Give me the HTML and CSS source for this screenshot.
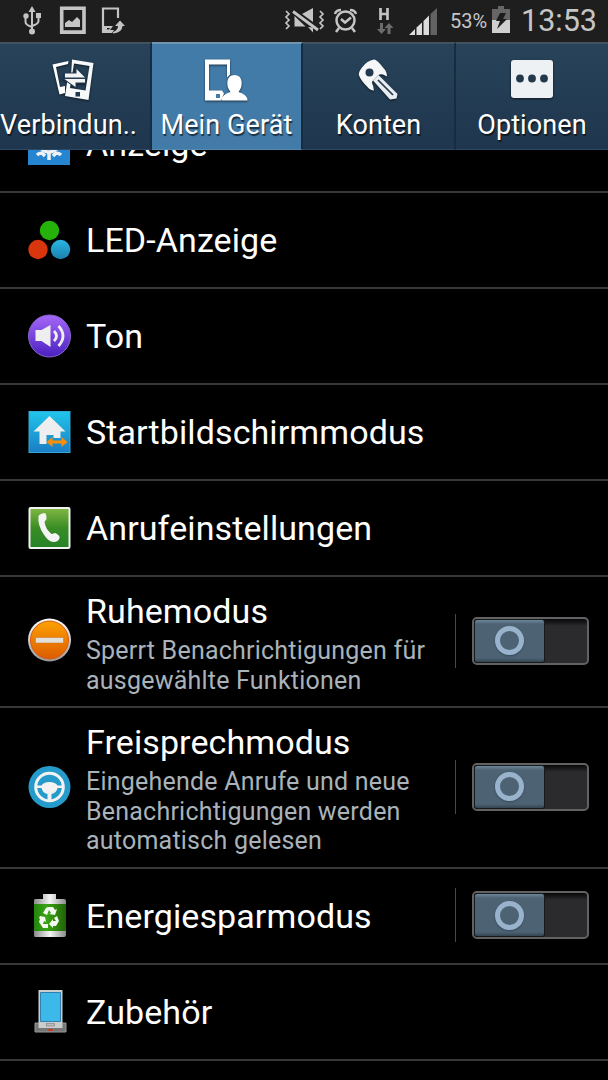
FILE: index.html
```html
<!DOCTYPE html>
<html lang="de">
<head>
  <meta charset="UTF-8" />
  <meta name="viewport" content="width=device-width, initial-scale=1.0"/>
  <title>Einstellungen</title>
  <link rel="stylesheet" href="styles.css">
</head>
<body>

<div class="statusbar">
  <svg class="status-icons" width="130" height="42" viewBox="0 0 130 42">
    <!-- USB -->
    <g fill="none" stroke="#c4c4c4" stroke-width="2">
      <path d="M32 10v20M25.500 18v4q0 3 6.500 5M38.500 17v4q0 3-6.500 5"/>
    </g>
    <g fill="#c4c4c4">
      <path d="M32 6l3.500 6h-7z"/><circle cx="32" cy="31.500" r="3"/>
      <circle cx="26" cy="16" r="2.700"/><path d="M36 13h5v5h-5z"/>
    </g>
    <!-- Bild -->
    <path d="M61.700 8.200h22.300v23.900h-22.300z" fill="none" stroke="#c4c4c4" stroke-width="3.600"/>
    <path d="M65 27v-4l4-3 3 2 5-5 3 3v7z" fill="#c4c4c4"/>
    <!-- Handy mit Pfeil -->
    <path d="M118 18V8.500H103V32h8" fill="none" stroke="#c4c4c4" stroke-width="2.200"/>
    <path d="M103 26h10l-3 4h4l-2 3h-9z" fill="#c4c4c4"/>
    <path d="M107 28h3l-1 1.500h-2z" fill="#1e1e1e"/>
    <path d="M113 32q5-2 5-6h-3l5-5.500 5 5.500h-2.500q-.500 7-9.500 7.500z" fill="#c4c4c4"/>
  </svg>
  <div class="status-right">
    <svg width="164" height="42" viewBox="284 0 164 42">
      <!-- Vibration, stumm -->
      <g fill="none" stroke="#c4c4c4" stroke-width="1.700">
        <path d="M286 11l3 3-3 3 3 3-3 3 3 3-3 3M320 11l3 3-3 3 3 3-3 3 3 3-3 3"/>
      </g>
      <path d="M294.500 16l11 10.500h-11zM302 14l11-6v14zM308 27l5 .5v5z" fill="#c4c4c4"/>
      <path d="M293 11.500l25 18.500" stroke="#c4c4c4" stroke-width="2.800"/>
      <!-- Wecker -->
      <g fill="none" stroke="#c4c4c4" stroke-width="2.500">
        <circle cx="345.500" cy="20.500" r="9"/>
        <path d="M341 19l4 3.500 6-5M339 28l-3 4M352 28l3 4M335 14q1-4 6-4M350 10q5 0 6 4"/>
      </g>
      <!-- Datenverbindung -->
      <path d="M380.500 8v12M387.500 8v12M381 14h6" stroke="#c4c4c4" stroke-width="2.700"/>
      <g fill="#6c6c6c">
        <path d="M380 23h3v6h3l-4.500 5-4.500-5h3zM387.500 34h3v-6h3l-4.500-5-4.500 5h3z"/>
      </g>
      <path d="M430.500 14l6.500-6v27h-6.500z" fill="#626262"/>
      <path d="M409 35l6-6v6zM416.500 27.500l5.500-5V35h-5.500zM423.500 21l5.500-5.500V35h-5.500z" fill="#dcdcdc"/>
    </svg>
    <span class="percent">53%</span>
    <svg class="battery" width="20" height="28" viewBox="0 0 20 28">
      <path d="M7 0h6v3h6v12H1V3h6z" fill="#666"/>
      <path d="M1 14h18v13H1z" fill="#cfcfcf"/>
      <path d="M9 7h6l-3 6h4L6 23l3-8H5z" fill="#1d1d1d"/>
    </svg>
    <span class="time">13:53</span>
  </div>
</div>

<div class="tabs">
  <div class="tab verbindungen">
    <svg width="46" height="46" viewBox="0 0 46 46">
      <path d="M2.500 6.500L18.500 3l-.5 3L6 9l4 20 5-1v7l-5.500 1.500z" fill="#fff"/>
      <path d="M22 1.500l21.500 3.500-5 37L15 38l3-20h3zM24 5.500L20 30l15.500 2.500L39.500 8z" fill="#f6f8f9" fill-rule="evenodd"/>
      <path d="M25.500 34h4.500v4.500h-4.500z" fill="#20384e"/>
      <path d="M15 15.500h11.500V11l8.500 8.500H15zM35 21v3.500h-9.500V29L14.500 21z" fill="#f2f4f6" stroke="#243c52" stroke-width="2" paint-order="stroke"/>
    </svg>
    <span>Verbindun..</span>
  </div>
  <div class="tab active">
    <svg width="46" height="46" viewBox="0 0 46 46">
      <path d="M1 1.500h25v15l-3 3V6.500H5v26h13l2 3-3 7H1z" fill="#fff"/>
      <path d="M12 36h4v4h-4z" fill="#437ba8"/>
      <path d="M17.500 42.500q0-6 9-8.500-4-5-3-11 1-6 7-6t7 6q1 6-3 11 9 2.500 9 8.500z" fill="#fff"/>
    </svg>
    <span>Mein Gerät</span>
  </div>
  <div class="tab">
    <svg width="46" height="46" viewBox="0 0 46 46">
      <path d="M18 1.500q3 0 9 8 4 4 4 9l-4-2q-3-1-5 1l-5 5q-2 2 0 5l1 5q-4 0-7-4-6-6-8-11-1-3 3-8 5-7 12-8z" fill="#f4f6f8"/>
      <circle cx="13.500" cy="14.500" r="4" fill="#203a51"/>
      <path d="M17 22.500l5.500-5.500 19 19-1 4.500-6.500 1z" fill="#e8edf1"/>
      <path d="M22 22l15 15" stroke="#263b4e" stroke-width="1.700"/>
    </svg>
    <span>Konten</span>
  </div>
  <div class="tab">
    <svg width="46" height="46" viewBox="0 0 46 46">
      <rect x="2" y="2" width="42" height="38" rx="3" fill="#edf1f4"/>
      <g fill="#22384b"><circle cx="11" cy="20.500" r="3.900"/><circle cx="23" cy="20.500" r="3.900"/><circle cx="35" cy="20.500" r="3.900"/></g>
    </svg>
    <span>Optionen</span>
  </div>
</div>

<div class="content">
<div class="list">
  <div class="row">
    <svg class="icon" viewBox="0 0 44 44">
      <path d="M1 1h42v42H1z" fill="#2585d0"/>
      <g fill="none" stroke="#eef2f5" stroke-width="3.500"><circle cx="22" cy="20" r="10"/><path d="M22 29v9M10 33q2-2 5-2l3 3M34 33q-2-2-5-2l-3 3"/></g>
    </svg>
    <div class="text"><div class="title">Anzeige</div></div>
  </div>
  <div class="row">
    <svg class="icon" viewBox="0 0 44 44">
      <circle cx="22.500" cy="12.500" r="9.700" fill="#25b30b"/>
      <circle cx="11" cy="31.500" r="9.700" fill="#da360d"/>
      <circle cx="33.500" cy="31.500" r="9.700" fill="url(#led)"/>
      <defs><linearGradient id="led" x2="0" y2="1"><stop stop-color="#29b7e3"/><stop offset="1" stop-color="#1c7fae"/></linearGradient></defs>
    </svg>
    <div class="text"><div class="title">LED-Anzeige</div></div>
  </div>
  <div class="row">
    <svg class="icon" viewBox="0 0 44 44">
      <defs><linearGradient id="ton" x2="0" y2="1"><stop stop-color="#a568f8"/><stop offset="1" stop-color="#4a20c0"/></linearGradient></defs>
      <circle cx="22.500" cy="22" r="21" fill="url(#ton)" stroke="#8a66cf"/>
      <path d="M8.500 16h6l9-5v22l-9-6h-6z" fill="#eee"/>
      <path d="M27 17q5 5 0 10M31.500 12q9 10 0 20" fill="none" stroke="#eee" stroke-width="2.800"/>
    </svg>
    <div class="text"><div class="title">Ton</div></div>
  </div>
  <div class="row">
    <svg class="icon" viewBox="0 0 44 44">
      <defs><linearGradient id="home" x2="0" y2="1"><stop stop-color="#20c5ea"/><stop offset="1" stop-color="#1c7dc5"/></linearGradient></defs>
      <rect x="2" y="1.500" width="41" height="41" fill="url(#home)" stroke="#35a8d8"/>
      <path d="M22.500 6l16 15.500h-5V28h-7v-3h-7v9h-7V21.500h-6z" fill="#eee"/>
      <path d="M19.500 32l6-5v3.500h9V27l6 5-6 5v-3.500h-9V37z" fill="#fa8d0a"/>
    </svg>
    <div class="text"><div class="title">Startbildschirmmodus</div></div>
  </div>
  <div class="row">
    <svg class="icon" viewBox="0 0 44 44">
      <defs><linearGradient id="call" x2="0" y2="1"><stop stop-color="#82b843"/><stop offset=".5" stop-color="#398d25"/><stop offset="1" stop-color="#268329"/></linearGradient></defs>
      <rect x="2.500" y="2" width="40" height="40" rx="1" fill="url(#call)" stroke="#f2f2f2" stroke-width="2"/>
      <path d="M11.500 10q1-2 6-3 2 0 2 6l-2 3q1 7 7 12l4-1q5 3 4 5-1 4-6 4-5 0-10-8-6-9-5-18z" fill="#f4f4f4"/>
    </svg>
    <div class="text"><div class="title">Anrufeinstellungen</div></div>
  </div>
  <div class="row detail ruhe">
    <svg class="icon" viewBox="0 0 44 44">
      <defs><linearGradient id="ruhe" x2="0" y2="1"><stop stop-color="#fda100"/><stop offset="1" stop-color="#dc5c00"/></linearGradient><linearGradient id="rim" x2="0" y2="1"><stop stop-color="#fff"/><stop offset="1" stop-color="#999"/></linearGradient></defs>
      <circle cx="22.500" cy="22" r="21.500" fill="url(#rim)"/>
      <circle cx="22.500" cy="22" r="19" fill="url(#ruhe)" stroke="#d85a17"/>
      <path d="M8.500 19.500h28v5.500h-28z" fill="#e2e0db" stroke="#ca7024" stroke-width=".5"/>
    </svg>
    <div class="text">
      <div class="title">Ruhemodus</div>
      <div class="sub">Sperrt Benachrichtigungen für<br>ausgewählte Funktionen</div>
    </div>
    <div class="switch"><div class="track"><div class="knob"><i></i></div></div></div>
  </div>
  <div class="row detail frei">
    <svg class="icon" viewBox="0 0 44 44">
      <circle cx="22.500" cy="23" r="21" fill="#259bcb"/>
      <circle cx="22.500" cy="23" r="13.800" fill="none" stroke="#f2f2f2" stroke-width="3"/>
      <path d="M8.500 21.500h6q2-3.500 8-3.500t8 3.500h6v2.500h-6q-1 5-6 6v6h-4v-6q-5-1-6-6h-6z" fill="#f2f2f2"/>
    </svg>
    <div class="text">
      <div class="title">Freisprechmodus</div>
      <div class="sub">Eingehende Anrufe und neue<br>Benachrichtigungen werden<br>automatisch gelesen</div>
    </div>
    <div class="switch"><div class="track"><div class="knob"><i></i></div></div></div>
  </div>
  <div class="row">
    <svg class="icon" viewBox="0 0 44 44">
      <defs>
        <linearGradient id="metal"><stop stop-color="#8a8a8a"/><stop offset=".5" stop-color="#f5f5f5"/><stop offset="1" stop-color="#8a8a8a"/></linearGradient>
        <linearGradient id="akku" x2="1" y2="0"><stop stop-color="#23850e"/><stop offset=".4" stop-color="#3aa414"/><stop offset="1" stop-color="#226406"/></linearGradient>
      </defs>
      <path d="M16 0h13v5h8q2 0 2 2v34q0 2-2 2H8q-1 0-1-2V7q0-2 1-2h8z" fill="url(#metal)"/>
      <path d="M7 10h32v27H7z" fill="url(#akku)"/>
      <!-- Recycling -->
      <path d="M16 19l3-5q1-1 3-1h4l2 3 2-1-2 6-6-1 2-1-2-3-2 5zM13 22l5 1 1 5-2-1-1 3h5v4h-5l-4-6 1-3-1-1zM27 24l3-2 2 5-3 5h-3v2l-4-4 4-5v2h3z" fill="#f4faef"/>
    </svg>
    <div class="text"><div class="title">Energiesparmodus</div></div>
    <div class="switch"><div class="track"><div class="knob"><i></i></div></div></div>
  </div>
  <div class="row">
    <svg class="icon" viewBox="0 0 44 44">
      <path d="M8 33h31v9H8z" fill="#777" stroke="#999"/>
      <path d="M11.500 0h24v38h-24z" fill="#c9cdcd"/>
      <path d="M13.500 2.500h20v29h-20z" fill="#3cb9e8" stroke="#327fad"/>
      <rect x="19.500" y="33.500" width="8" height="2.500" fill="#bbb" stroke="#888" stroke-width=".7"/>
      <path d="M21.500 39h4v2h-4z" fill="#e0320c"/>
    </svg>
    <div class="text"><div class="title">Zubehör</div></div>
  </div>
</div>
</div>

</body>
</html>
```
FILE: styles.css
```css
body {
  font-family: Roboto, sans-serif;
  background: #000;
  color: #fff;
  margin: 0;
  height: 1080px;
  overflow: hidden;
}
svg {
  display: block;
  flex: none;
}
.statusbar {
  display: flex;
  justify-content: space-between;
  height: 42px;
  background: #1e1e1e;
  color: #c6c6c6;
}
.status-right {
  display: flex;
  align-items: center;
  width: 324px;
  white-space: nowrap;
}
.percent {
  width: 43px;
  padding-left: 2px;
  font-size: 20px;
}
.battery {
  margin: 0 10px 3px -2px;
}
.time {
  font-size: 30.5px;
  line-height: 40px;
}
.tabs {
  display: grid;
  grid-template-columns: 152px 151px 153px 152px;
  height: 108px;
}
.tab {
  display: flex;
  flex-direction: column;
  align-items: center;
  box-sizing: border-box;
  padding-top: 14px;
  border-top: 2px solid #42535f;
  border-right: 2px solid #182c3e;
  border-bottom: 1px solid #2c4a64;
  background: linear-gradient(#284359, #1e364e);
  font-size: 27px;
  letter-spacing: 0.1px;
  line-height: 42px;
  white-space: nowrap;
  text-shadow: 1px 2px 1px rgba(0,0,0,0.6);
}
.tab:last-child {
  border-right: 0;
}
.tab svg {
  filter: drop-shadow(0 1px 1px rgba(0,0,0,0.6));
}
.verbindungen svg {
  margin-right: 4px;
}
.verbindungen span {
  align-self: flex-start;
}
.active {
  background: #437ba8;
  border-top-color: #7196b2;
  border-bottom-color: #5489b2;
}
.content {
  height: 930px;
  overflow: hidden;
}
.list {
  margin-top: -53px;
}
.row {
  display: flex;
  align-items: center;
  box-sizing: border-box;
  height: 96px;
  padding-left: 27px;
  border-bottom: 2px solid #383838;
}
.icon {
  width: 44px;
  height: 44px;
  margin-right: 15px;
}
.text {
  flex: 1;
  white-space: nowrap;
}
.title {
  font-size: 34px;
  letter-spacing: 0.1px;
  line-height: 40px;
}
.sub {
  margin-top: 5px;
  color: #a9b3b9;
  font-size: 25px;
  letter-spacing: 0.22px;
  line-height: 29.5px;
}
.detail .text {
  padding-top: 3px;
}
.detail .icon {
  margin-bottom: 3px;
}
.ruhe {
  height: 131px;
}
.frei {
  height: 161px;
}
.switch {
  display: flex;
  align-items: center;
  height: 54px;
  padding-left: 16px;
  margin: 0 19px 2px 0;
  border-left: 1px solid #484848;
}
.track {
  box-sizing: border-box;
  width: 117px;
  height: 48px;
  padding: 1px;
  border: 2px solid #626262;
  border-radius: 5px;
  background: linear-gradient(#08080a, #2b2b2e 7px);
}
.knob {
  display: flex;
  align-items: center;
  justify-content: center;
  width: 69px;
  height: 42px;
  border-radius: 2px;
  background: linear-gradient(#6b8799, #4d6374 4px, #4d6374 38px, #334450);
  box-shadow: 0 0 0 1px #15191c;
}
.knob i {
  width: 19px;
  height: 19px;
  border: 5px solid #99b3cd;
  border-radius: 50%;
  box-shadow: 0 1px 2px #34495b;
}
```
